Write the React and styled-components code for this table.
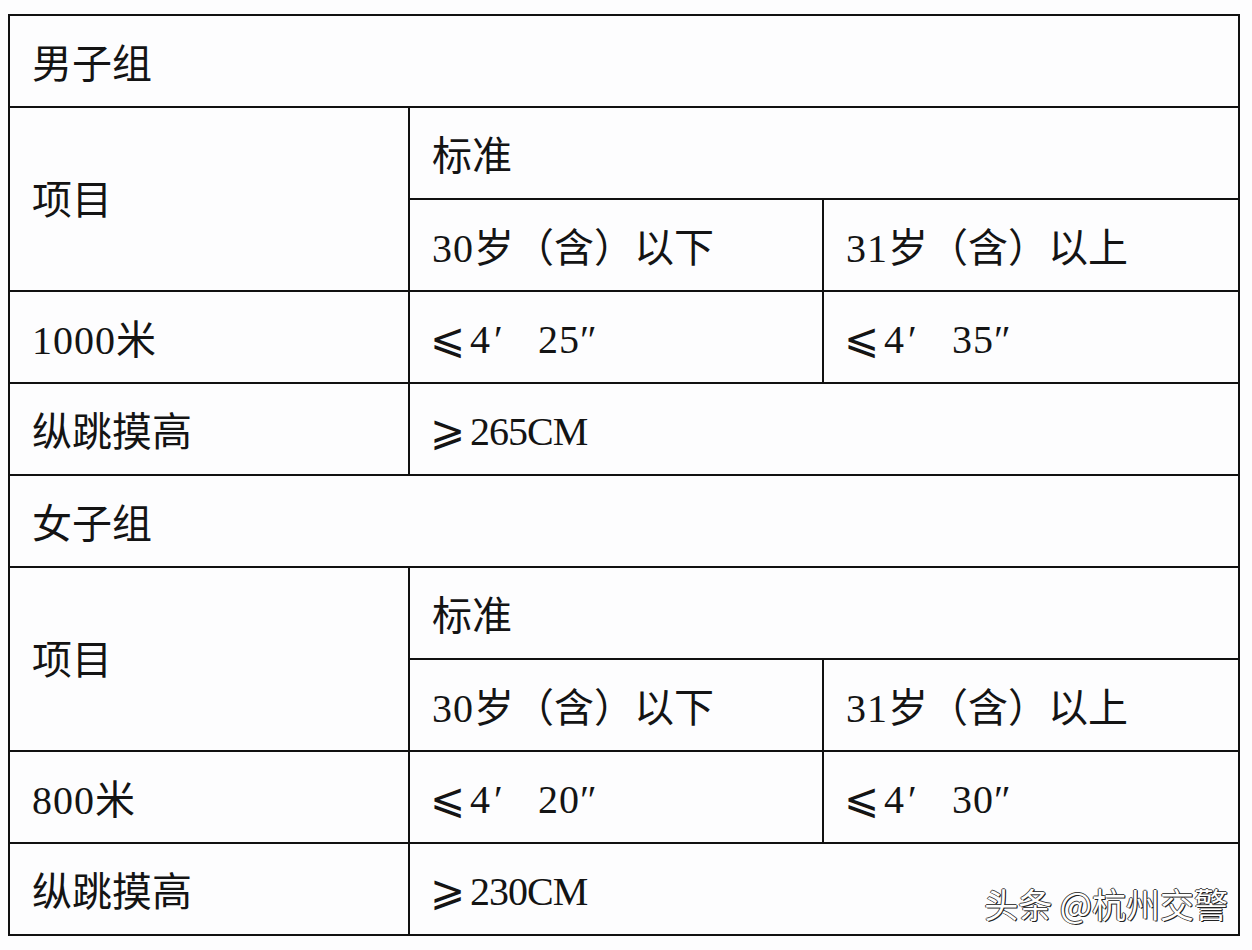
import React from "react";
import styled, { createGlobalStyle } from "styled-components";

const GlobalStyle = createGlobalStyle`
  html, body {
    margin: 0;
    padding: 0;
    background: #fdfdfe;
  }
`;

const Page = styled.div`
  position: relative;
  width: 1252px;
  height: 950px;
  padding: 14px 0 0 8px;
  box-sizing: border-box;
`;

const Table = styled.table`
  border-collapse: collapse;
  table-layout: fixed;
  width: 1230px;
  font-family: "Liberation Serif", "Noto Sans CJK SC", serif;
  font-size: 40px;
  color: #141414;
`;

const Cell = styled.td`
  border: 2px solid #111;
  height: 86px;
  padding: ${(p) => (p.$tall ? "0 0 0 22px" : "4px 0 0 22px")};
  vertical-align: middle;
  white-space: nowrap;
  line-height: 1;
`;

const Cjk = styled.span`
  font-family: "Noto Sans CJK SC", sans-serif;
  font-weight: 400;
`;

const Digits = styled.span`
  letter-spacing: 1px;
`;

const Sym = styled.span`
  display: inline-block;
  width: 40px;
  font-family: "DejaVu Sans", sans-serif;
  font-size: 42px;
  font-weight: 200;
  line-height: 1;
  margin-left: -2px;
`;

const Prime = styled.span`
  display: inline-block;
  width: ${(p) => p.$w}px;
  padding-left: 4px;
  box-sizing: border-box;
`;

const Mono = styled.span`
  letter-spacing: -1px;
`;

const Watermark = styled.div`
  position: absolute;
  right: 24px;
  bottom: 22px;
  font-family: "Noto Sans CJK SC", sans-serif;
  font-size: 34px;
  color: #fff;
  text-shadow: 1px 1px 0 #222, -1px 0 0 #444, 0 -1px 0 #444, 1px 0 0 #222;
`;

const Time = ({ min, sec }) => (
  <>
    <Sym>⩽</Sym>
    {min}
    <Prime $w={48}>′</Prime>
    <Digits>{sec}</Digits>″
  </>
);

const groups = [
  { title: "男子组", run: "1000", young: ["4", "25"], old: ["4", "35"], jump: "265CM" },
  { title: "女子组", run: "800", young: ["4", "20"], old: ["4", "30"], jump: "230CM" },
];

const Group = ({ g }) => (
  <>
    <tr>
      <Cell colSpan={3}>
        <Cjk>{g.title}</Cjk>
      </Cell>
    </tr>
    <tr>
      <Cell rowSpan={2} $tall>
        <Cjk>项目</Cjk>
      </Cell>
      <Cell colSpan={2}>
        <Cjk>标准</Cjk>
      </Cell>
    </tr>
    <tr>
      <Cell>
        <Digits>30</Digits>
        <Cjk>岁（含）以下</Cjk>
      </Cell>
      <Cell>
        <Digits>31</Digits>
        <Cjk>岁（含）以上</Cjk>
      </Cell>
    </tr>
    <tr>
      <Cell>
        <Digits>{g.run}</Digits>
        <Cjk>米</Cjk>
      </Cell>
      <Cell>
        <Time min={g.young[0]} sec={g.young[1]} />
      </Cell>
      <Cell>
        <Time min={g.old[0]} sec={g.old[1]} />
      </Cell>
    </tr>
    <tr>
      <Cell>
        <Cjk>纵跳摸高</Cjk>
      </Cell>
      <Cell colSpan={2}>
        <Sym>⩾</Sym>
        <Mono>{g.jump}</Mono>
      </Cell>
    </tr>
  </>
);

export default function App() {
  return (
    <>
      <GlobalStyle />
      <Page>
        <Table>
          <colgroup>
            <col style={{ width: 400 }} />
            <col style={{ width: 414 }} />
            <col style={{ width: 416 }} />
          </colgroup>
          <tbody>
            {groups.map((g) => (
              <Group key={g.title} g={g} />
            ))}
          </tbody>
        </Table>
        <Watermark>头条 @杭州交警</Watermark>
      </Page>
    </>
  );
}
